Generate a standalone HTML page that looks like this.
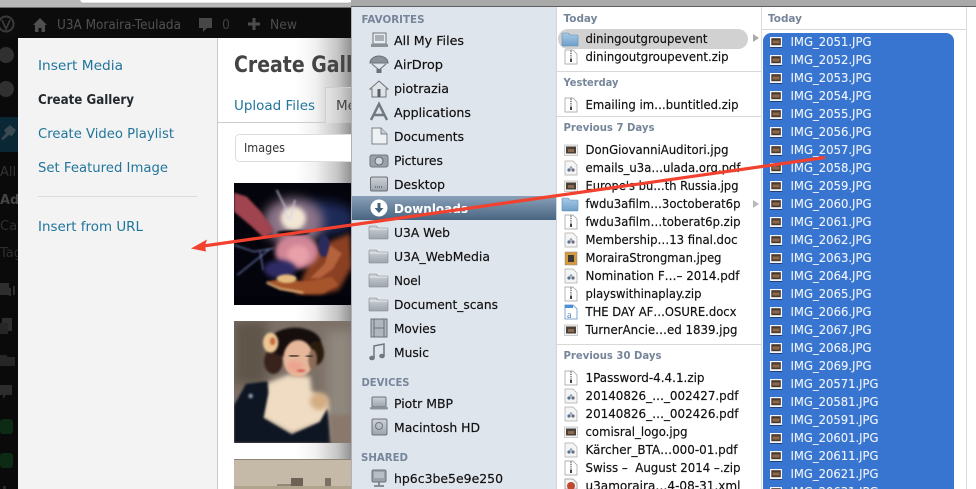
<!DOCTYPE html>
<html lang="en"><head><meta charset="utf-8"><title>Create Gallery</title>
<style>
html,body{margin:0;padding:0;background:#000;width:976px;height:489px;overflow:hidden}
svg{display:block}
text{font-family:"DejaVu Sans",sans-serif;font-size:12px;fill:#111;white-space:pre}
.wp{font-size:13.5px;fill:#21759b;font-family:"DejaVu Sans",sans-serif}
.h{font-size:11px;font-weight:bold;fill:#76859a}
.w{fill:#eef3fb}
.d{fill:#4b4b4b;font-size:13px}
.s text{stroke:#111;stroke-width:.18}
.sw text{stroke:#eef3fb;stroke-width:.12}
</style></head><body>
<svg width="976" height="489" viewBox="0 0 976 489" xmlns="http://www.w3.org/2000/svg">
<defs>
<linearGradient id="sh" x1="0" x2="1" y1="0" y2="0"><stop offset="0" stop-color="#fff"/><stop offset=".35" stop-color="#f1f1f1"/><stop offset=".75" stop-color="#c4c4c4"/><stop offset="1" stop-color="#8f8f8f"/></linearGradient>
<linearGradient id="dl" x1="0" x2="0" y1="0" y2="1"><stop offset="0" stop-color="#8aa0b8"/><stop offset="1" stop-color="#486581"/></linearGradient>
<linearGradient id="gf" x1="0" x2="0" y1="0" y2="1"><stop offset="0" stop-color="#ced2d8"/><stop offset="1" stop-color="#9ea4ac"/></linearGradient>
<linearGradient id="bf" x1="0" x2="0" y1="0" y2="1"><stop offset="0" stop-color="#a9cbe6"/><stop offset="1" stop-color="#6d9fc9"/></linearGradient>
<filter id="b1" x="-30%" y="-30%" width="160%" height="160%"><feGaussianBlur stdDeviation="3"/></filter>
<filter id="b2" x="-30%" y="-30%" width="160%" height="160%"><feGaussianBlur stdDeviation="7"/></filter>
<filter id="b4" x="-50%" y="-50%" width="200%" height="200%"><feGaussianBlur stdDeviation="16"/></filter>
<clipPath id="c1"><rect x="12" y="9" width="354" height="366"/></clipPath>
<clipPath id="c2"><rect x="12" y="9" width="354" height="366"/></clipPath>
<clipPath id="cc"><rect x="218" y="38" width="134" height="451"/></clipPath>
<g id="folder"><path d="M-9 -6h6l2 2h9a1 1 0 0 1 1 1v9a1 1 0 0 1-1 1H-9a1 1 0 0 1-1-1V-5a1 1 0 0 1 1-1z" fill="url(#gf)" stroke="#7c838b" stroke-width=".6"/><path d="M-9.5 -3H8.5" stroke="#eceff2" stroke-width="1"/></g>
<g id="bfolder"><path d="M-7 -6h5l2 2h7a1 1 0 0 1 1 1v9a1 1 0 0 1-1 1H-7a1 1 0 0 1-1-1V-5a1 1 0 0 1 1-1z" transform="translate(-1 0)" fill="url(#bf)" stroke="#5d8bb2" stroke-width=".6"/></g>
<g id="zip"><path d="M-6 -7h8l4 4v10H-6z" fill="#fff" stroke="#999" stroke-width=".7"/><path d="M0 -6.500V2" stroke="#666" stroke-width="1.400" stroke-dasharray="1.300 1"/><rect x="-1" y="2" width="2" height="3" fill="#444"/></g>
<g id="pdf"><path d="M-6 -7h8l4 4v10H-6z" fill="#f4f4f4" stroke="#aaa" stroke-width=".7"/><circle cx="-2" cy="2" r="1.600" fill="#54708f"/><circle cx="2" cy="2" r="1.600" fill="#6b6b7a"/><circle cx="0" cy="-.5" r="1.300" fill="#8ba3bb"/></g>
<g id="tn"><rect x="-6.500" y="-5" width="13" height="10.500" fill="#f4f4f4" stroke="#888" stroke-width=".4"/><rect x="-5" y="-3.500" width="10" height="7" fill="#4b4038"/><rect x="-3" y="-1" width="6" height="3" fill="#8a6a50"/></g>
<g id="t3"><rect x="-6" y="-5" width="12" height="10" fill="#f5f7fb"/><rect x="-4.700" y="-3.800" width="9.500" height="7" fill="#4a392c"/><rect x="-3.500" y="-1.500" width="7" height="3" fill="#8d6a4e"/><path d="M-6 5.500h12" stroke="#1f3e78" stroke-width="1"/></g>
</defs>

<!-- browser strip and dark background -->
<rect width="352" height="489" fill="#0a0a0a"/>
<rect width="352" height="8" fill="#b9b9b9"/>
<rect x="80" y="-6" width="272" height="9" rx="3" fill="#fff" stroke="#999" stroke-width=".5"/>
<rect y="7" width="352" height="1" fill="#6e6e6e"/>
<rect y="8" width="352" height="30" fill="#0c0c0c"/>

<!-- admin bar -->
<circle cx="6" cy="24" r="7.500" fill="none" stroke="#3a3a3a" stroke-width="2"/>
<path d="M2 20l4 9 4-9" fill="none" stroke="#3a3a3a" stroke-width="1.800"/>
<path d="M33 25l7-7 7 7h-2v7h-3.500v-4h-3v4H35v-7z" fill="#4f4f4f"/>
<text x="57" y="29" class="d" textLength="124" lengthAdjust="spacingAndGlyphs" style="fill:#515151">U3A Moraira-Teulada</text>
<path d="M199 18h13v10h-5l-4 4v-4h-4z" fill="#474747"/>
<text x="222" y="29" class="d" style="fill:#3f3f3f" textLength="8" lengthAdjust="spacingAndGlyphs">0</text>
<path d="M254 18v12M248 24h12" stroke="#4d4d4d" stroke-width="3"/>
<text x="270" y="29" class="d" textLength="27" lengthAdjust="spacingAndGlyphs" style="fill:#4d4d4d">New</text>

<!-- dim admin sidebar -->
<circle cx="6" cy="55" r="8" fill="#303030"/>
<circle cx="6" cy="89" r="8" fill="#303030"/>
<rect y="117" width="18" height="35" fill="#0a2735"/>
<path d="M1 139l5-6-2-3 6-5 6 5-4 6-3-1-6 5z" fill="#3b4a52"/>
<text x="0" y="176" class="d" style="fill:#333">All</text>
<text x="0" y="204" class="d" style="fill:#444;font-weight:bold">Ad</text>
<text x="0" y="230" class="d" style="fill:#2e2e2e">Cat</text>
<text x="0" y="257" class="d" style="fill:#2e2e2e">Tag</text>
<path d="M0 284h8v10H0zM10 288v8M14 286v9" stroke="#2e2e2e" stroke-width="2" fill="#2e2e2e"/>
<rect x="2" y="318" width="10" height="13" fill="#2e2e2e"/><rect x="0" y="323" width="8" height="11" fill="#262626"/>
<path d="M0 355h6l2 2h7v9H0z" fill="#262626"/>
<path d="M0 385h12v10H6l-3 4v-4H0z" fill="#2c2c2c"/>
<rect x="0" y="419" width="13" height="15" rx="3" fill="#0c2a14"/>
<rect x="0" y="453" width="13" height="15" rx="3" fill="#0c2a14"/>
<rect x="3" y="486" width="3" height="3" fill="#2a2a2a"/>

<!-- modal menu -->
<rect x="18" y="38" width="199" height="451" fill="#f3f3f3"/>
<rect x="217" y="38" width="1" height="451" fill="#c9c9c9"/>
<text class="wp" x="38" y="70" textLength="85" lengthAdjust="spacingAndGlyphs">Insert Media</text>
<text class="wp" x="38" y="104" textLength="96" lengthAdjust="spacingAndGlyphs" style="fill:#23282d;font-weight:600">Create Gallery</text>
<text class="wp" x="38" y="138" textLength="136" lengthAdjust="spacingAndGlyphs">Create Video Playlist</text>
<text class="wp" x="38" y="172" textLength="130" lengthAdjust="spacingAndGlyphs">Set Featured Image</text>
<rect x="38" y="196" width="159" height="1" fill="#dcdcdc"/>
<text class="wp" x="38" y="231" textLength="105" lengthAdjust="spacingAndGlyphs">Insert from URL</text>

<!-- modal content -->
<rect x="218" y="38" width="134" height="451" fill="#fff"/>
<rect x="296" y="38" width="56" height="451" fill="url(#sh)"/>
<g clip-path="url(#cc)">
<text x="234" y="72" textLength="153" lengthAdjust="spacingAndGlyphs" style="font-size:22px;font-weight:bold;fill:#444">Create Gallery</text>
<text class="wp" x="234" y="110" textLength="81" lengthAdjust="spacingAndGlyphs">Upload Files</text>
<path d="M218 122.500H325.500V87.500H360" fill="none" stroke="#ccc"/>
<rect x="326" y="88" width="40" height="35" fill="#fff" opacity=".25"/>
<text x="336" y="110" class="wp" style="fill:#444">Media</text>
<rect x="235.500" y="134.500" width="140" height="27" rx="4" fill="#fff" stroke="#ddd"/>
<text x="244" y="152" style="font-size:12.500px;fill:#333" textLength="41" lengthAdjust="spacingAndGlyphs">Images</text>
</g>

<!-- image 1 (drawn in 3x coordinates) -->
<g transform="translate(230 180) scale(.33333)"><g clip-path="url(#c1)">
<rect x="12" y="9" width="354" height="366" fill="#04040c"/>
<ellipse cx="275" cy="115" rx="100" ry="50" fill="#1b2a58" filter="url(#b4)"/>
<ellipse cx="190" cy="125" rx="90" ry="70" fill="#8d7488" filter="url(#b4)"/>
<path d="M12 38L50 50 90 92 132 150 104 175 60 135 12 95z" fill="#a04450" filter="url(#b1)"/>
<ellipse cx="190" cy="115" rx="38" ry="36" fill="#f2e6d4" filter="url(#b2)"/>
<path d="M140 30l25 50 8 40M195 60l-15 60" stroke="#cfd2e8" stroke-width="4" fill="none" filter="url(#b1)"/>
<path d="M260 200l100-40 6 100-40 70-60 15-70-5z" fill="#8a3f22" filter="url(#b2)"/>
<ellipse cx="200" cy="215" rx="65" ry="52" fill="#cf8596" filter="url(#b2)"/>
<ellipse cx="205" cy="225" rx="34" ry="30" fill="#e9a0a8" filter="url(#b2)"/>
<path d="M12 195l60 20 60-10M22 285l50-40 50-40M90 215l10 55" stroke="#7f90d0" stroke-width="3" fill="none" filter="url(#b1)"/>
<ellipse cx="150" cy="268" rx="48" ry="28" fill="#2d2a63" filter="url(#b2)"/>
<ellipse cx="282" cy="198" rx="18" ry="34" fill="#2a2a5c" filter="url(#b1)"/>
<path d="M300 195l-15 55-45 45 30 0 40-30 25-45z" fill="#b5633c" filter="url(#b1)"/>
<path d="M108 305l40 22 70 15 62-2 45-25-20-25-50 10-40 5-20-5-30-5z" fill="#a6552b" filter="url(#b1)"/>
<ellipse cx="170" cy="296" rx="30" ry="13" fill="#e4bc80" filter="url(#b1)"/>
<path d="M110 308l40 18 70 12" stroke="#d9b07c" stroke-width="6" fill="none" filter="url(#b1)"/>
<ellipse cx="190" cy="158" rx="50" ry="7" fill="#050505" filter="url(#b1)"/>
<rect x="12" y="350" width="354" height="25" fill="#02020a"/>
</g></g>

<!-- image 2 (drawn in 3x coordinates) -->
<g transform="translate(230 318) scale(.33333)"><g clip-path="url(#c2)">
<rect x="12" y="9" width="354" height="366" fill="#7c7067"/>
<rect x="12" y="9" width="100" height="190" fill="#5e5449" filter="url(#b4)"/>
<rect x="290" y="40" width="76" height="335" fill="#90887f" filter="url(#b4)"/>
<ellipse cx="130" cy="130" rx="28" ry="38" fill="#38241a" filter="url(#b1)"/>
<ellipse cx="195" cy="75" rx="78" ry="46" fill="#15100e" filter="url(#b1)"/>
<ellipse cx="258" cy="105" rx="24" ry="36" fill="#2a1a10" filter="url(#b1)"/>
<path d="M170 170l70 5 5 45 45 22 8 35-28 38-85 32-88-48 16-105 57-22z" fill="#efdcc2" filter="url(#b2)"/>
<ellipse cx="205" cy="122" rx="45" ry="56" fill="#e6b79a" filter="url(#b1)"/>
<ellipse cx="248" cy="125" rx="13" ry="30" fill="#8b6a58" filter="url(#b1)"/>
<ellipse cx="195" cy="145" rx="24" ry="15" fill="#eda28f" filter="url(#b2)"/>
<path d="M178 113h28M228 116h20" stroke="#33231e" stroke-width="7" filter="url(#b1)"/>
<ellipse cx="213" cy="158" rx="13" ry="4" fill="#d2574f" filter="url(#b1)"/>
<ellipse cx="122" cy="74" rx="23" ry="30" fill="#ecc695" filter="url(#b1)"/>
<ellipse cx="128" cy="70" rx="8" ry="12" fill="#c96a3d" filter="url(#b1)"/>
<ellipse cx="268" cy="250" rx="28" ry="26" fill="#d3ad84" filter="url(#b2)"/>
<path d="M12 262L48 198 112 190 115 225 100 300 185 350 270 312 292 272 302 375H12z" fill="#0b1424" filter="url(#b1)"/>
<circle cx="62" cy="234" r="7" fill="#8d99aa" filter="url(#b1)"/>
<rect x="302" y="290" width="64" height="85" fill="#8a786c" filter="url(#b2)"/>
</g></g>

<!-- image 3 -->
<rect x="234" y="459" width="118" height="30" fill="#c5b9a7"/>
<rect x="234" y="459" width="118" height="1" fill="#8f8577"/>
<rect x="291" y="478" width="12" height="11" fill="#6e6155"/>
<rect x="277" y="484" width="14" height="5" fill="#938778"/>
<rect x="325" y="478" width="6" height="11" fill="#7c6f64"/>
<rect x="234" y="486" width="118" height="3" fill="#b1a48f"/>

<!-- Finder window -->
<rect x="351" y="0" width="625" height="489" fill="#fff"/>
<rect x="351" y="0" width="625" height="6" fill="#a9a9a9"/>
<rect x="351" y="6" width="625" height="1" fill="#5f5f5f"/>
<rect x="352" y="7" width="204" height="482" fill="#dfe5ed"/>
<rect x="351" y="7" width="1" height="482" fill="#aeb2b8"/>
<rect x="556" y="7" width="1" height="482" fill="#d4d4d4"/>
<rect x="761" y="7" width="1" height="482" fill="#dcdcdc"/>
<rect x="966" y="7" width="1" height="482" fill="#dcdcdc"/>

<!-- Sidebar -->
<text class="h" x="361.500" y="23" textLength="63" lengthAdjust="spacingAndGlyphs">FAVORITES</text>
<rect x="352" y="196" width="204" height="24" fill="url(#dl)"/>
<rect x="373" y="33" width="13" height="11" fill="#e9edf2" stroke="#6d747c"/><path d="M375 36h9M375 38h9M375 40h9" stroke="#6d747c"/><rect x="371" y="44" width="17" height="3" fill="#8b929a"/>
<path d="M370 63a9 7 0 0 1 18 0z" fill="#8a9199" stroke="#6a7078"/><path d="M372 64l7 6 7-6" fill="none" stroke="#6a7078"/><rect x="376.500" y="69" width="5" height="4" fill="#6a7078"/>
<path d="M370 89l9-8 9 8h-2v8h-14v-8z" fill="#dfe3e8" stroke="#6d747c"/><rect x="377.500" y="89" width="3" height="8" fill="#555d65"/>
<path d="M371 120l8-16 8 16M374 115h10" fill="none" stroke="#717880" stroke-width="2.500"/>
<path d="M372 128h9l6 6v10h-15z" fill="#eef1f4" stroke="#7c838b"/><path d="M381 128v6h6" fill="#c8cdd3" stroke="#7c838b"/>
<rect x="370" y="155" width="18" height="12" rx="2" fill="#9aa1a9" stroke="#6f767e"/><circle cx="379" cy="161" r="4" fill="#cfd4da" stroke="#5f666e"/>
<rect x="370.500" y="177" width="17" height="14" rx="1.500" fill="url(#gf)" stroke="#6a7179"/><path d="M375 187h8" stroke="#444" stroke-dasharray="1 1"/>
<circle cx="379" cy="208" r="8.500" fill="#fff"/><path d="M377.500 203h3v5h3l-4.500 5-4.500-5h3z" fill="#45617e"/>
<use href="#folder" x="379" y="232"/><use href="#folder" x="379" y="256"/><use href="#folder" x="379" y="280"/><use href="#folder" x="379" y="304"/>
<rect x="371" y="319" width="16" height="18" fill="#b0b6bd" stroke="#6a7179"/><path d="M374 319v18M384 319v18M374 328h10" stroke="#6a7179"/>
<path d="M374 358V346l10-2v12" fill="none" stroke="#70777f" stroke-width="1.500"/><ellipse cx="372" cy="358" rx="2.800" ry="2.300" fill="#70777f"/><ellipse cx="382" cy="356" rx="2.800" ry="2.300" fill="#70777f"/>
<rect x="372" y="397" width="14" height="10" rx="1" fill="url(#gf)" stroke="#6a7179"/><rect x="370" y="407" width="18" height="2.500" rx="1" fill="#8b929a"/>
<rect x="372" y="419" width="15" height="16" rx="1.500" fill="url(#gf)" stroke="#6a7179"/><circle cx="379" cy="426" r="3.500" fill="none" stroke="#70777f"/>
<rect x="372" y="470" width="14" height="12" rx="1.500" fill="#9aa1a9" stroke="#6a7179"/><path d="M374 473h10M374 475h10M374 477h10" stroke="#d6dade"/><path d="M379 482v3M374 486h10" stroke="#6a7179" stroke-width="1.500"/>

<g class="s">
<text x="394" y="45" textLength="70" lengthAdjust="spacingAndGlyphs">All My Files</text>
<text x="394" y="69" textLength="49" lengthAdjust="spacingAndGlyphs">AirDrop</text>
<text x="394" y="93" textLength="55" lengthAdjust="spacingAndGlyphs">piotrazia</text>
<text x="394" y="117" textLength="77" lengthAdjust="spacingAndGlyphs">Applications</text>
<text x="394" y="141" textLength="70" lengthAdjust="spacingAndGlyphs">Documents</text>
<text x="394" y="165" textLength="49" lengthAdjust="spacingAndGlyphs">Pictures</text>
<text x="394" y="189" textLength="51" lengthAdjust="spacingAndGlyphs">Desktop</text>
<text x="394" y="237" textLength="56" lengthAdjust="spacingAndGlyphs">U3A Web</text>
<text x="394" y="261" textLength="96" lengthAdjust="spacingAndGlyphs">U3A_WebMedia</text>
<text x="394" y="285" textLength="27" lengthAdjust="spacingAndGlyphs">Noel</text>
<text x="394" y="309" textLength="104" lengthAdjust="spacingAndGlyphs">Document_scans</text>
<text x="394" y="333" textLength="42" lengthAdjust="spacingAndGlyphs">Movies</text>
<text x="394" y="357" textLength="35" lengthAdjust="spacingAndGlyphs">Music</text>
<text x="394" y="408" textLength="59" lengthAdjust="spacingAndGlyphs">Piotr MBP</text>
<text x="394" y="432" textLength="86" lengthAdjust="spacingAndGlyphs">Macintosh HD</text>
<text x="394" y="483" textLength="109" lengthAdjust="spacingAndGlyphs">hp6c3be5e9e250</text>
</g>
<text x="394" y="213" textLength="74" lengthAdjust="spacingAndGlyphs" style="fill:#fff;font-weight:bold">Downloads</text>
<text class="h" x="361.500" y="386" textLength="48" lengthAdjust="spacingAndGlyphs">DEVICES</text>
<text class="h" x="361" y="461" textLength="47" lengthAdjust="spacingAndGlyphs">SHARED</text>

<!-- Column 2 -->
<rect x="558" y="29" width="190" height="20" rx="10" fill="#d1d1d1"/>
<path d="M753 34l6 4-6 4z" fill="#a9a9a9"/><path d="M753 200l6 4-6 4z" fill="#b9b9b9"/>
<rect x="557" y="71" width="204" height="1" fill="#d8d8d8"/>
<rect x="557" y="116" width="204" height="1" fill="#d8d8d8"/>
<rect x="557" y="344" width="204" height="1" fill="#d8d8d8"/>
<text class="h" x="563.500" y="22" textLength="34" lengthAdjust="spacingAndGlyphs">Today</text>
<text class="h" x="563.500" y="86" textLength="55" lengthAdjust="spacingAndGlyphs">Yesterday</text>
<text class="h" x="563.500" y="131" textLength="91" lengthAdjust="spacingAndGlyphs">Previous 7 Days</text>
<text class="h" x="563.500" y="359" textLength="98" lengthAdjust="spacingAndGlyphs">Previous 30 Days</text>

<use href="#bfolder" x="571" y="39"/><use href="#zip" x="571" y="57"/><use href="#zip" x="571" y="105"/>
<use href="#tn" x="571" y="150"/><use href="#pdf" x="571" y="168"/><use href="#tn" x="571" y="186"/><use href="#bfolder" x="571" y="204"/><use href="#zip" x="571" y="222"/><use href="#pdf" x="571" y="240"/>
<rect x="565" y="252" width="12" height="13" fill="#d89a3c" stroke="#888" stroke-width=".5"/><rect x="568" y="255" width="6" height="7" fill="#3a3a3a"/>
<use href="#pdf" x="571" y="276"/><use href="#zip" x="571" y="294"/>
<path d="M565 305h8l4 4v10h-12z" fill="#fff" stroke="#7ea7d0"/><rect x="565" y="305" width="8" height="3" fill="#4a90d9"/><text x="567" y="318" style="font-size:10px;fill:#4a7fb5;font-family:'Liberation Serif',serif">a</text>
<use href="#tn" x="571" y="330"/>
<use href="#zip" x="571" y="378"/><use href="#pdf" x="571" y="396"/><use href="#pdf" x="571" y="414"/><use href="#tn" x="571" y="432"/><use href="#pdf" x="571" y="450"/><use href="#zip" x="571" y="468"/>
<path d="M565 479h8l4 4v6h-12z" fill="#f4f4f4" stroke="#aaa"/><circle cx="571" cy="486" r="4" fill="#c0492f"/>

<g class="s">
<text x="585.500" y="43" textLength="122" lengthAdjust="spacingAndGlyphs">diningoutgroupevent</text>
<text x="585.500" y="61" textLength="143" lengthAdjust="spacingAndGlyphs">diningoutgroupevent.zip</text>
<text x="585.500" y="109" textLength="153" lengthAdjust="spacingAndGlyphs">Emailing im…buntitled.zip</text>
<text x="585.500" y="154" textLength="143" lengthAdjust="spacingAndGlyphs">DonGiovanniAuditori.jpg</text>
<text x="585.500" y="172" textLength="155" lengthAdjust="spacingAndGlyphs">emails_u3a…ulada.org.pdf</text>
<text x="585.500" y="190" textLength="153" lengthAdjust="spacingAndGlyphs">Europe's bu…th Russia.jpg</text>
<text x="585.500" y="208" textLength="155" lengthAdjust="spacingAndGlyphs">fwdu3afilm…3octoberat6p</text>
<text x="585.500" y="226" textLength="155" lengthAdjust="spacingAndGlyphs">fwdu3afilm…toberat6p.zip</text>
<text x="585.500" y="244" textLength="152" lengthAdjust="spacingAndGlyphs">Membership…13 final.doc</text>
<text x="585.500" y="262" textLength="136" lengthAdjust="spacingAndGlyphs">MorairaStrongman.jpeg</text>
<text x="585.500" y="280" textLength="154" lengthAdjust="spacingAndGlyphs">Nomination F…– 2014.pdf</text>
<text x="585.500" y="298" textLength="116" lengthAdjust="spacingAndGlyphs">playswithinaplay.zip</text>
<text x="585.500" y="316" textLength="151" lengthAdjust="spacingAndGlyphs">THE DAY AF…OSURE.docx</text>
<text x="585.500" y="334" textLength="152" lengthAdjust="spacingAndGlyphs">TurnerAncie…ed 1839.jpg</text>
<text x="585.500" y="382" textLength="119" lengthAdjust="spacingAndGlyphs">1Password-4.4.1.zip</text>
<text x="585.500" y="400" textLength="153" lengthAdjust="spacingAndGlyphs">20140826_…_002427.pdf</text>
<text x="585.500" y="418" textLength="153" lengthAdjust="spacingAndGlyphs">20140826_…_002426.pdf</text>
<text x="585.500" y="436" textLength="102" lengthAdjust="spacingAndGlyphs">comisral_logo.jpg</text>
<text x="585.500" y="454" textLength="152" lengthAdjust="spacingAndGlyphs">Kärcher_BTA…000-01.pdf</text>
<text x="585.500" y="472" textLength="155" lengthAdjust="spacingAndGlyphs">Swiss –  August 2014 –.zip</text>
<text x="585.500" y="490" textLength="155" lengthAdjust="spacingAndGlyphs">u3amoraira…4-08-31.xml</text>
</g>

<!-- Column 3 -->
<rect x="762" y="29" width="204" height="1" fill="#d8d8d8"/>
<text class="h" x="768" y="22" textLength="34" lengthAdjust="spacingAndGlyphs">Today</text>
<path d="M763 489V41a8 8 0 0 1 8-8H946a8 8 0 0 1 8 8V489z" fill="#3875d0"/>
<use href="#t3" x="776" y="42"/><use href="#t3" x="776" y="60"/><use href="#t3" x="776" y="78"/><use href="#t3" x="776" y="96"/><use href="#t3" x="776" y="114"/><use href="#t3" x="776" y="132"/><use href="#t3" x="776" y="150"/><use href="#t3" x="776" y="168"/><use href="#t3" x="776" y="186"/><use href="#t3" x="776" y="204"/><use href="#t3" x="776" y="222"/><use href="#t3" x="776" y="240"/><use href="#t3" x="776" y="258"/><use href="#t3" x="776" y="276"/><use href="#t3" x="776" y="294"/><use href="#t3" x="776" y="312"/><use href="#t3" x="776" y="330"/><use href="#t3" x="776" y="348"/><use href="#t3" x="776" y="366"/><use href="#t3" x="776" y="384"/><use href="#t3" x="776" y="402"/><use href="#t3" x="776" y="420"/><use href="#t3" x="776" y="438"/><use href="#t3" x="776" y="456"/><use href="#t3" x="776" y="474"/><use href="#t3" x="776" y="492"/>
<g class="sw">
<text class="w" x="790.500" y="46" textLength="81" lengthAdjust="spacingAndGlyphs">IMG_2051.JPG</text>
<text class="w" x="790.500" y="64" textLength="81" lengthAdjust="spacingAndGlyphs">IMG_2052.JPG</text>
<text class="w" x="790.500" y="82" textLength="81" lengthAdjust="spacingAndGlyphs">IMG_2053.JPG</text>
<text class="w" x="790.500" y="100" textLength="81" lengthAdjust="spacingAndGlyphs">IMG_2054.JPG</text>
<text class="w" x="790.500" y="118" textLength="81" lengthAdjust="spacingAndGlyphs">IMG_2055.JPG</text>
<text class="w" x="790.500" y="136" textLength="81" lengthAdjust="spacingAndGlyphs">IMG_2056.JPG</text>
<text class="w" x="790.500" y="154" textLength="81" lengthAdjust="spacingAndGlyphs">IMG_2057.JPG</text>
<text class="w" x="790.500" y="172" textLength="81" lengthAdjust="spacingAndGlyphs">IMG_2058.JPG</text>
<text class="w" x="790.500" y="190" textLength="81" lengthAdjust="spacingAndGlyphs">IMG_2059.JPG</text>
<text class="w" x="790.500" y="208" textLength="81" lengthAdjust="spacingAndGlyphs">IMG_2060.JPG</text>
<text class="w" x="790.500" y="226" textLength="81" lengthAdjust="spacingAndGlyphs">IMG_2061.JPG</text>
<text class="w" x="790.500" y="244" textLength="81" lengthAdjust="spacingAndGlyphs">IMG_2062.JPG</text>
<text class="w" x="790.500" y="262" textLength="81" lengthAdjust="spacingAndGlyphs">IMG_2063.JPG</text>
<text class="w" x="790.500" y="280" textLength="81" lengthAdjust="spacingAndGlyphs">IMG_2064.JPG</text>
<text class="w" x="790.500" y="298" textLength="81" lengthAdjust="spacingAndGlyphs">IMG_2065.JPG</text>
<text class="w" x="790.500" y="316" textLength="81" lengthAdjust="spacingAndGlyphs">IMG_2066.JPG</text>
<text class="w" x="790.500" y="334" textLength="81" lengthAdjust="spacingAndGlyphs">IMG_2067.JPG</text>
<text class="w" x="790.500" y="352" textLength="81" lengthAdjust="spacingAndGlyphs">IMG_2068.JPG</text>
<text class="w" x="790.500" y="370" textLength="81" lengthAdjust="spacingAndGlyphs">IMG_2069.JPG</text>
<text class="w" x="790.500" y="388" textLength="88" lengthAdjust="spacingAndGlyphs">IMG_20571.JPG</text>
<text class="w" x="790.500" y="406" textLength="88" lengthAdjust="spacingAndGlyphs">IMG_20581.JPG</text>
<text class="w" x="790.500" y="424" textLength="88" lengthAdjust="spacingAndGlyphs">IMG_20591.JPG</text>
<text class="w" x="790.500" y="442" textLength="88" lengthAdjust="spacingAndGlyphs">IMG_20601.JPG</text>
<text class="w" x="790.500" y="460" textLength="88" lengthAdjust="spacingAndGlyphs">IMG_20611.JPG</text>
<text class="w" x="790.500" y="478" textLength="88" lengthAdjust="spacingAndGlyphs">IMG_20621.JPG</text>
<text class="w" x="790.500" y="496" textLength="88" lengthAdjust="spacingAndGlyphs">IMG_20631.JPG</text>
</g>

<!-- Red arrow -->
<path d="M825 157.500L200 246.500" stroke="#f2412e" stroke-width="3.200" fill="none"/>
<path d="M191 248.500L207 239.500 205 245.500 206 251.500z" fill="#f2412e"/>
</svg>
</body></html>
